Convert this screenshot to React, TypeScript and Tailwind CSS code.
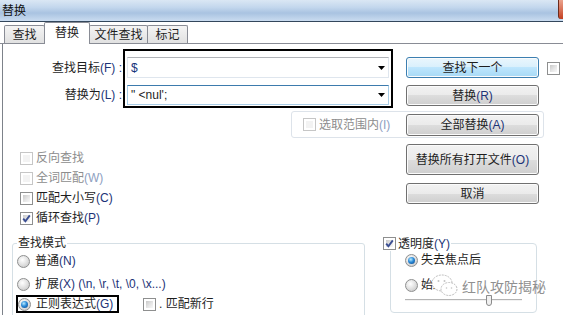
import React from "react";

function Check({ checked = false, disabled = false }: { checked?: boolean; disabled?: boolean }) {
  return (
    <span
      className={`relative w-[13px] h-[13px] shrink-0 border bg-white p-[2px] flex ${
        disabled ? "border-[#c6c6c6]" : "border-[#8e8f8f]"
      }`}
    >
      <span
        className={`flex-1 ${
          disabled
            ? "bg-[#f3f3f3]"
            : "bg-[linear-gradient(135deg,#c9c9c9_0%,#e6e6e6_55%,#f8f8f8_100%)]"
        }`}
      />
      {checked && (
        <svg className="absolute left-[0px] top-[0px]" width="11" height="11" viewBox="0 0 11 11">
          <path d="M2.2 5.6 L4.4 8.2 L8.8 2.4" fill="none" stroke="#3b4f93" strokeWidth="1.9" />
        </svg>
      )}
    </span>
  );
}

function Radio({ checked = false }: { checked?: boolean }) {
  return (
    <span className="w-[13px] h-[13px] shrink-0 rounded-full border border-[#8e8f8f] bg-[radial-gradient(circle_at_40%_35%,#ffffff_0%,#e4e4e4_45%,#c0c0c0_100%)] flex items-center justify-center">
      {checked && (
        <span className="w-[7px] h-[7px] rounded-full bg-[radial-gradient(circle_at_40%_35%,#b9ecff_0%,#2a8ad8_45%,#0b3f80_100%)]" />
      )}
    </span>
  );
}

function L({ children, dim = false }: { children: React.ReactNode; dim?: boolean }) {
  return <span className={dim ? "text-[#8ea0bf]" : "text-[#1c3377]"}>{children}</span>;
}

function Btn({
  children,
  def = false,
  className = "",
}: {
  children: React.ReactNode;
  def?: boolean;
  className?: string;
}) {
  return (
    <div
      className={`w-[133px] shrink-0 rounded-[3px] border flex items-center justify-center shadow-[inset_0_0_0_1px_#fbfbfb] ${
        def
          ? "border-[#3c7fb1] bg-[linear-gradient(to_bottom,#eaf6fd_0%,#d9f0fc_50%,#bee6fd_50%,#a7d9f5_100%)]"
          : "border-[#707070] bg-[linear-gradient(to_bottom,#f2f2f2_0%,#ebebeb_50%,#dddddd_50%,#cfcfcf_100%)]"
      } ${className}`}
    >
      {children}
    </div>
  );
}

function Arrow() {
  return (
    <svg width="7" height="4" viewBox="0 0 7 4" className="shrink-0">
      <path d="M0 0h7L3.5 4z" fill="#000" />
    </svg>
  );
}

export default function App() {
  return (
    <div className="relative w-[563px] h-[315px] overflow-hidden bg-white text-[12px] leading-none text-[#1e1e1e] font-['Liberation_Sans','Noto_Sans_CJK_SC',sans-serif]">
      {/* title bar */}
      <div className="h-[22px] border-b border-[#33475c] bg-[linear-gradient(to_bottom,#dae7f4_0%,#c3d7ed_35%,#a9c3e1_62%,#cadcf0_100%)] flex items-start">
        <span className="pl-[2px] h-[21px] flex items-center text-[#111]">替换</span>
        <span className="ml-auto w-[5px] h-[19px] border-l border-[#6b2b1c] rounded-bl-[3px] bg-linear-to-b from-[#eaa28c] to-[#c33d1c]" />
      </div>

      {/* tabs */}
      <div className="h-[22px] border-b border-[#898c95] flex items-end pl-[4px]">
        <div className="w-[41px] h-[18px] border border-b-0 border-[#898c95] rounded-t-[2px] bg-[linear-gradient(to_bottom,#f4f4f4,#e1e1e1)] flex items-center justify-center">
          查找
        </div>
        <div className="relative z-10 -ml-px -mb-px w-[46px] h-[22px] border border-b-0 border-[#898c95] rounded-t-[2px] bg-white flex items-center justify-center pb-[1px]">
          替换
        </div>
        <div className="-ml-px w-[59px] h-[18px] border border-b-0 border-[#898c95] rounded-t-[2px] bg-[linear-gradient(to_bottom,#f4f4f4,#e1e1e1)] flex items-center justify-center">
          文件查找
        </div>
        <div className="-ml-px w-[41px] h-[18px] border border-b-0 border-[#898c95] rounded-t-[2px] bg-[linear-gradient(to_bottom,#f4f4f4,#e1e1e1)] flex items-center justify-center">
          标记
        </div>
      </div>

      {/* content */}
      <div className="ml-[2px] border-l border-[#7d828a] h-[271px]">
        {/* top section */}
        <div className="flex h-[192px]">
          <div className="w-[392px] shrink-0 flex flex-col">
            <div className="flex mt-[5px]">
              <div className="w-[120px] shrink-0 flex flex-col items-end pr-[1px] pt-[8px]">
                <div className="h-[21px] flex items-center">
                  查找目标<L>(F) :</L>
                </div>
                <div className="h-[20px] mt-[7px] flex items-center">
                  替换为<L>(L) :</L>
                </div>
              </div>
              <div className="w-[270px] h-[59px] border-2 border-black px-[2px] pt-[6px] flex flex-col gap-[7px]">
                <div className="h-[21px] border border-[#dfe6ee] border-t-[#b0b3b8] flex items-center pl-[3px] pr-[3px]">
                  <span className="text-[#16337a]">$</span>
                  <span className="ml-auto">
                    <Arrow />
                  </span>
                </div>
                <div className="h-[20px] border border-[#a9cde6] border-t-[#3d7bad] flex items-center pl-[3px] pr-[3px]">
                  <span>" &lt;nul';</span>
                  <span className="ml-auto">
                    <Arrow />
                  </span>
                </div>
              </div>
            </div>

            <div className="ml-[288px] mt-[3px] w-[253px] h-[27px] shrink-0 border border-[#dde3ea] rounded-[3px] flex items-center pl-[11px] gap-[3px] text-[#8d8d8d]">
              <Check disabled />
              <span>
                选取范围内<L dim>(I)</L>
              </span>
            </div>

            <div className="mt-[10px] pl-[17px] flex flex-col">
              <div className="h-[20px] flex items-center gap-[3px] text-[#8d8d8d]">
                <Check disabled />
                <span>反向查找</span>
              </div>
              <div className="h-[20px] flex items-center gap-[3px] text-[#8d8d8d]">
                <Check disabled />
                <span>
                  全词匹配<L dim>(W)</L>
                </span>
              </div>
              <div className="h-[20px] flex items-center gap-[3px]">
                <Check />
                <span>
                  匹配大小写<L>(C)</L>
                </span>
              </div>
              <div className="h-[20px] flex items-center gap-[3px]">
                <Check checked />
                <span>
                  循环查找<L>(P)</L>
                </span>
              </div>
            </div>
          </div>

          <div className="ml-[11px] flex items-start">
            <div className="flex flex-col mt-[13px]">
              <Btn def className="h-[21px]">
                查找下一个
              </Btn>
              <Btn className="h-[21px] mt-[7px]">
                替换<L>(R)</L>
              </Btn>
              <Btn className="h-[22px] mt-[8px]">
                全部替换<L>(A)</L>
              </Btn>
              <Btn className="h-[31px] mt-[8px]">
                替换所有打开文件<L>(O)</L>
              </Btn>
              <Btn className="h-[21px] mt-[8px]">取消</Btn>
            </div>
            <div className="ml-[8px] mt-[18px]">
              <Check />
            </div>
          </div>
        </div>

        {/* bottom section */}
        <div className="flex items-start">
          <fieldset className="ml-[9px] w-[353px] h-[85px] shrink-0 border border-[#d5dfe5] rounded-[3px]">
            <legend className="ml-[4px] px-[1px] h-[14px] leading-[14px]">查找模式</legend>
            <div className="pl-[4px] mt-[2px] h-[18px] flex items-center gap-[5px]">
              <Radio />
              <span>
                普通<L>(N)</L>
              </span>
            </div>
            <div className="pl-[4px] mt-[5px] h-[18px] flex items-center gap-[5px]">
              <Radio />
              <span>
                扩展<L>(X) (\n, \r, \t, \0, \x...)</L>
              </span>
            </div>
            <div className="mt-[2px] flex items-center">
              <div className="ml-[3px] w-[103px] h-[18px] border-2 border-black flex items-center gap-[5px]">
                <Radio checked />
                <span>
                  正则表达式<L>(G)</L>
                </span>
              </div>
              <div className="ml-[24px] flex items-center gap-[3px]">
                <Check />
                <span>. 匹配新行</span>
              </div>
            </div>
          </fieldset>

          <fieldset className="ml-[25px] w-[147px] h-[77px] shrink-0 border border-[#d5dfe5] rounded-[4px]">
            <legend className="-ml-[8px] h-[14px] leading-[14px] pr-[1px]">
              <span className="inline-flex items-center gap-[2px] h-[14px] bg-white">
                <Check checked />
                <span>
                  透明度<L>(Y)</L>
                </span>
              </span>
            </legend>
            <div className="pl-[14px] mt-[1px] h-[18px] flex items-center gap-[3px]">
              <Radio checked />
              <span>失去焦点后</span>
            </div>
            <div className="pl-[14px] mt-[7px] h-[18px] flex items-center gap-[3px]">
              <Radio />
              <span>始终</span>
            </div>
            <div className="ml-[14px] mt-[1px] relative w-[117px] h-[12px]">
              <div className="absolute left-0 right-0 top-[4px] h-[2px] border-t border-[#b4b4b4] border-b border-b-[#f2f2f2] bg-[#d6d6d6]" />
              <div className="absolute left-[81px] top-0 w-[6px] h-[11px] border border-[#8a8a8a] rounded-b-[3px] bg-[#f0f0f0]" />
            </div>
          </fieldset>
        </div>
      </div>

      {/* watermark overlay */}
      <div className="absolute left-[430px] top-[273px] flex items-center">
        <svg width="30" height="26" viewBox="0 0 30 26">
          <ellipse cx="12" cy="10" rx="10" ry="8" fill="#fff" stroke="#bdbdbd" strokeWidth="1" strokeDasharray="2 1" />
          <ellipse cx="19" cy="16" rx="8" ry="6.5" fill="#fff" stroke="#bdbdbd" strokeWidth="1" strokeDasharray="2 1" />
          <circle cx="8.5" cy="8" r="1" fill="#c4c4c4" />
          <circle cx="14.5" cy="8" r="1" fill="#c4c4c4" />
          <circle cx="16.5" cy="15" r="0.8" fill="#c4c4c4" />
          <circle cx="21.5" cy="15" r="0.8" fill="#c4c4c4" />
        </svg>
        <span className="ml-[2px] text-[14px] leading-none text-[#909090] [text-shadow:0_0_2px_#fff] font-['Noto_Sans_CJK_SC',sans-serif]">
          红队攻防揭秘
        </span>
      </div>
    </div>
  );
}
